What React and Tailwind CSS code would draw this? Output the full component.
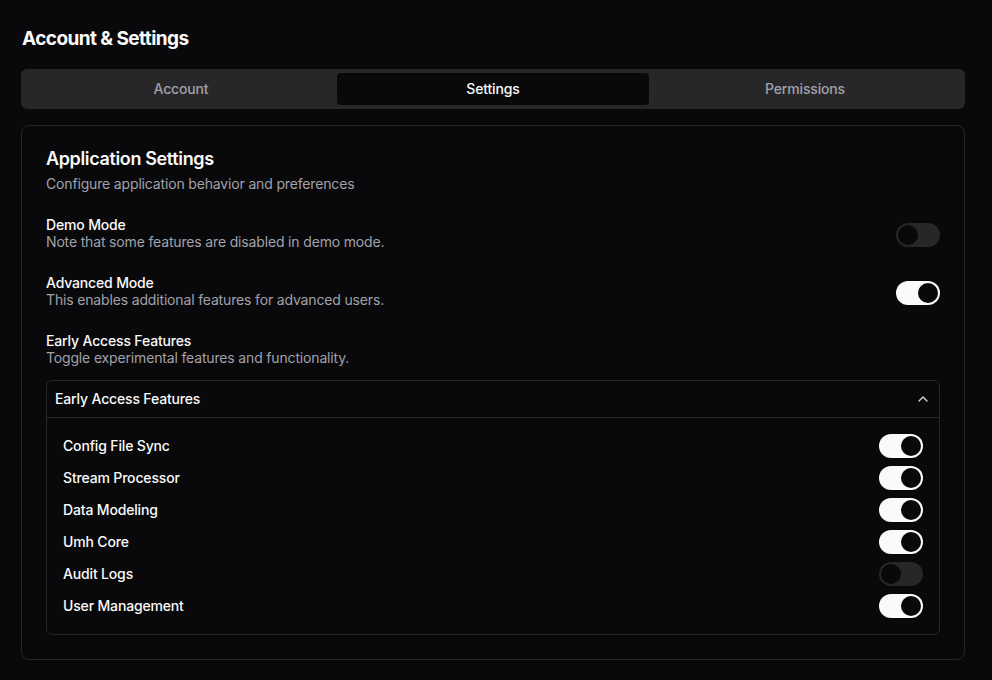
import { useState } from "react";
import { ChevronUp } from "lucide-react";

function Toggle({ on, onChange }) {
  return (
    <button
      type="button"
      onClick={onChange}
      className={`relative inline-flex h-6 w-11 shrink-0 items-center rounded-full border-2 border-transparent transition-colors ${
        on ? "bg-[#fafafa]" : "bg-[#27272a]"
      }`}
    >
      <span
        className={`block h-5 w-5 rounded-full bg-[#09090b] transition-transform ${
          on ? "translate-x-5" : "translate-x-0"
        }`}
      />
    </button>
  );
}

const tabs = ["Account", "Settings", "Permissions"];

export default function App() {
  const [tab, setTab] = useState("Settings");
  const [demo, setDemo] = useState(false);
  const [advanced, setAdvanced] = useState(true);
  const [open, setOpen] = useState(true);
  const [features, setFeatures] = useState([
    { name: "Config File Sync", on: true },
    { name: "Stream Processor", on: true },
    { name: "Data Modeling", on: true },
    { name: "Umh Core", on: true },
    { name: "Audit Logs", on: false },
    { name: "User Management", on: true },
  ]);

  const flip = (i) =>
    setFeatures(features.map((f, j) => (j === i ? { ...f, on: !f.on } : f)));

  return (
    <div className="min-h-screen bg-[#09090b] pl-[21px] pr-[27px] pt-[25px] pb-5 text-[#fafafa] font-['Inter',sans-serif] tracking-[-0.01em]">
      <h1 className="text-[19px] leading-7 font-bold tracking-[-0.03em] pl-px">
        Account &amp; Settings
      </h1>

      <div className="mt-4 grid h-10 grid-cols-3 rounded-md bg-[#27272a] p-1">
        {tabs.map((t) => (
          <button
            key={t}
            onClick={() => setTab(t)}
            className={`rounded-sm text-sm font-medium ${
              tab === t ? "bg-[#09090b] text-[#fafafa]" : "text-[#a1a1aa]"
            }`}
          >
            {t}
          </button>
        ))}
      </div>

      <div className="mt-4 rounded-lg border border-[#27272a] bg-[#09090b]">
        <div className="flex flex-col gap-1.5 p-6">
          <h2 className="text-lg leading-none font-semibold tracking-[-0.02em]">
            Application Settings
          </h2>
          <p className="text-sm text-[#a1a1aa]">
            Configure application behavior and preferences
          </p>
        </div>

        <div className="px-6 pb-6">
          <div className="flex flex-col gap-6">
            <div className="flex items-center justify-between">
              <div>
                <div className="text-sm leading-none font-medium">Demo Mode</div>
                <div className="text-sm text-[#a1a1aa]">
                  Note that some features are disabled in demo mode.
                </div>
              </div>
              <Toggle on={demo} onChange={() => setDemo(!demo)} />
            </div>

            <div className="flex items-center justify-between">
              <div>
                <div className="text-sm leading-none font-medium">Advanced Mode</div>
                <div className="text-sm text-[#a1a1aa]">
                  This enables additional features for advanced users.
                </div>
              </div>
              <Toggle on={advanced} onChange={() => setAdvanced(!advanced)} />
            </div>

            <div>
              <div className="text-sm leading-none font-medium">
                Early Access Features
              </div>
              <div className="text-sm text-[#a1a1aa]">
                Toggle experimental features and functionality.
              </div>

              <div className="mt-3 rounded-md border border-[#27272a]">
                <button
                  onClick={() => setOpen(!open)}
                  className="flex w-full items-center justify-between px-2 py-2 text-sm font-medium"
                >
                  <span>Early Access Features</span>
                  <ChevronUp
                    className={`h-4 w-4 text-[#d4d4d8] transition-transform ${
                      open ? "" : "rotate-180"
                    }`}
                  />
                </button>
                {open && (
                  <div className="flex flex-col gap-2 border-t border-[#27272a] p-4">
                    {features.map((f, i) => (
                      <div key={f.name} className="flex items-center justify-between">
                        <span className="text-sm font-medium">{f.name}</span>
                        <Toggle on={f.on} onChange={() => flip(i)} />
                      </div>
                    ))}
                  </div>
                )}
              </div>
            </div>
          </div>
        </div>
      </div>
    </div>
  );
}
